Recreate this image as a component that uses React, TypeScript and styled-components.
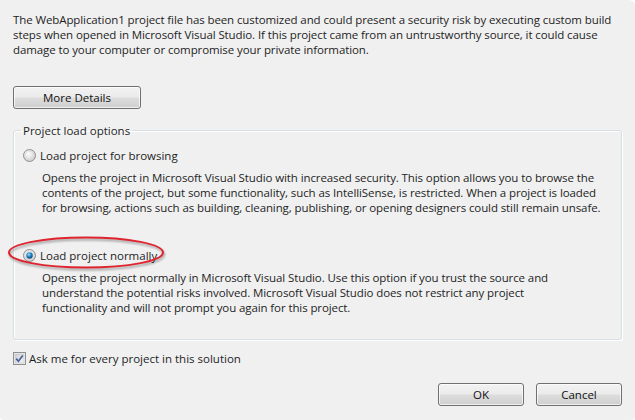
import styled, { createGlobalStyle } from "styled-components";

const GlobalStyle = createGlobalStyle`
    html, body {
        margin: 0;
        padding: 0;
        background: #ffffff;
    }
    body {
        font-family: "Open Sans", "Noto Sans", sans-serif;
        font-size: 11.5px;
        color: #1e1e1e;
    }
`

const Dialog = styled.div`
    width: 635px;
    height: 420px;
    box-sizing: border-box;
    background: #f0f0f0;
    border-radius: 0 6px 4px 4px;
    padding: 12px 13px 0 13px;
    display: flex;
    flex-direction: column;
`

const Paragraph = styled.p<{ $indent?: number }>`
    margin: 0;
    padding-left: ${(p) => p.$indent ?? 0}px;
    line-height: 15px;
    white-space: nowrap;
    letter-spacing: -0.1px;
`

const Button = styled.button<{ $width: number }>`
    width: ${(p) => p.$width}px;
    height: 23px;
    box-sizing: border-box;
    border: 1px solid #707070;
    border-radius: 3px;
    background: linear-gradient(to bottom, #f2f2f2 0%, #ebebeb 48%, #dddddd 52%, #cfcfcf 100%);
    box-shadow: inset 0 0 0 1px rgba(255, 255, 255, 0.7);
    font-family: inherit;
    font-size: 11.5px;
    color: #111;
    padding: 0;
    cursor: pointer;
`

const DetailsRow = styled.div`
    margin-top: 29px;
`

const GroupBox = styled.fieldset`
    margin: 14px 0 0 0;
    padding: 10px 0 24px 0;
    border: 1px solid #d5dfe5;
    border-radius: 3px;
    box-shadow: inset 1px 1px 0 #ffffff, 1px 1px 0 #ffffff;

    legend {
        margin-left: 7px;
        padding: 0 2px;
        line-height: 15px;
    }
`

const Option = styled.div<{ $top: number; $gap: number }>`
    margin-top: ${(p) => p.$top}px;
    display: flex;
    flex-direction: column;
    gap: ${(p) => p.$gap}px;
`

const ChoiceRow = styled.label`
    position: relative;
    display: flex;
    align-items: center;
    gap: 4px;
    margin-left: 9px;
    line-height: 15px;
    white-space: nowrap;
`

const Highlight = styled.svg`
    position: absolute;
    left: -16px;
    top: -13px;
    pointer-events: none;
`

const CheckRow = styled.label`
    display: flex;
    align-items: center;
    gap: 3px;
    margin-top: 11px;
    line-height: 15px;
`

const Footer = styled.div`
    display: flex;
    justify-content: flex-end;
    gap: 12px;
    margin-top: 17px;
`

function Radio({ checked }: { checked?: boolean }) {
    return (
        <svg width="13" height="13" viewBox="0 0 13 13">
            <defs>
                <radialGradient id={checked ? "rOn" : "rOff"} cx="40%" cy="35%" r="70%">
                    <stop offset="0%" stopColor="#ffffff" />
                    <stop offset="100%" stopColor="#c9c9c9" />
                </radialGradient>
                <radialGradient id="dot" cx="40%" cy="35%" r="70%">
                    <stop offset="0%" stopColor="#a9dbf6" />
                    <stop offset="45%" stopColor="#2a8ccb" />
                    <stop offset="100%" stopColor="#0b3e70" />
                </radialGradient>
            </defs>
            <circle cx="6.5" cy="6.5" r="6" fill={`url(#${checked ? "rOn" : "rOff"})`} stroke="#8e8f8f" strokeWidth="1" />
            <circle cx="6.5" cy="6.5" r="4.3" fill="none" stroke="#d8d8d8" strokeWidth="0.8" />
            {checked && <circle cx="6.5" cy="6.5" r="3.2" fill="url(#dot)" />}
        </svg>
    )
}

function CheckBox() {
    return (
        <svg width="13" height="13" viewBox="0 0 13 13">
            <defs>
                <linearGradient id="cb" x1="0" y1="0" x2="1" y2="1">
                    <stop offset="0%" stopColor="#cbcfd5" />
                    <stop offset="100%" stopColor="#f6f6f6" />
                </linearGradient>
            </defs>
            <rect x="0.5" y="0.5" width="12" height="12" fill="#f4f4f4" stroke="#8e8f8f" />
            <rect x="2" y="2" width="9" height="9" fill="url(#cb)" stroke="#b8bcc2" strokeWidth="0.6" />
            <path d="M3.2 6.6 L5.4 9.2 L9.8 3.4" fill="none" stroke="#4a5f97" strokeWidth="1.7" />
        </svg>
    )
}

export default function App() {
    return (
        <>
            <GlobalStyle />
            <Dialog>
                <div>
                    <Paragraph>The WebApplication1 project file has been customized and could present a security risk by executing custom build</Paragraph>
                    <Paragraph>steps when opened in Microsoft Visual Studio. If this project came from an untrustworthy source, it could cause</Paragraph>
                    <Paragraph>damage to your computer or compromise your private information.</Paragraph>
                </div>

                <DetailsRow>
                    <Button $width={128}>More Details</Button>
                </DetailsRow>

                <GroupBox>
                    <legend>Project load options</legend>

                    <Option $top={0} $gap={7}>
                        <ChoiceRow>
                            <Radio />
                            <span>Load project for browsing</span>
                        </ChoiceRow>
                        <div>
                            <Paragraph $indent={28}>Opens the project in Microsoft Visual Studio with increased security. This option allows you to browse the</Paragraph>
                            <Paragraph $indent={28}>contents of the project, but some functionality, such as IntelliSense, is restricted. When a project is loaded</Paragraph>
                            <Paragraph $indent={28}>for browsing, actions such as building, cleaning, publishing, or opening designers could still remain unsafe.</Paragraph>
                        </div>
                    </Option>

                    <Option $top={33} $gap={7}>
                        <ChoiceRow>
                            <Radio checked />
                            <span>Load project normally</span>
                            <Highlight width="162" height="40" viewBox="0 0 162 40">
                                <defs>
                                    <filter id="blur" x="-10%" y="-30%" width="120%" height="160%">
                                        <feGaussianBlur stdDeviation="1.2" />
                                    </filter>
                                </defs>
                                <ellipse cx="80" cy="19.5" rx="77" ry="15" fill="none" stroke="rgba(0,0,0,0.35)" strokeWidth="2" filter="url(#blur)" />
                                <ellipse cx="79" cy="17.5" rx="77" ry="15" fill="none" stroke="#e0242f" strokeWidth="2" />
                            </Highlight>
                        </ChoiceRow>
                        <div>
                            <Paragraph $indent={28}>Opens the project normally in Microsoft Visual Studio. Use this option if you trust the source and</Paragraph>
                            <Paragraph $indent={28}>understand the potential risks involved. Microsoft Visual Studio does not restrict any project</Paragraph>
                            <Paragraph $indent={28}>functionality and will not prompt you again for this project.</Paragraph>
                        </div>
                    </Option>
                </GroupBox>

                <CheckRow>
                    <CheckBox />
                    <span>Ask me for every project in this solution</span>
                </CheckRow>

                <Footer>
                    <Button $width={86}>OK</Button>
                    <Button $width={86}>Cancel</Button>
                </Footer>
            </Dialog>
        </>
    )
}
